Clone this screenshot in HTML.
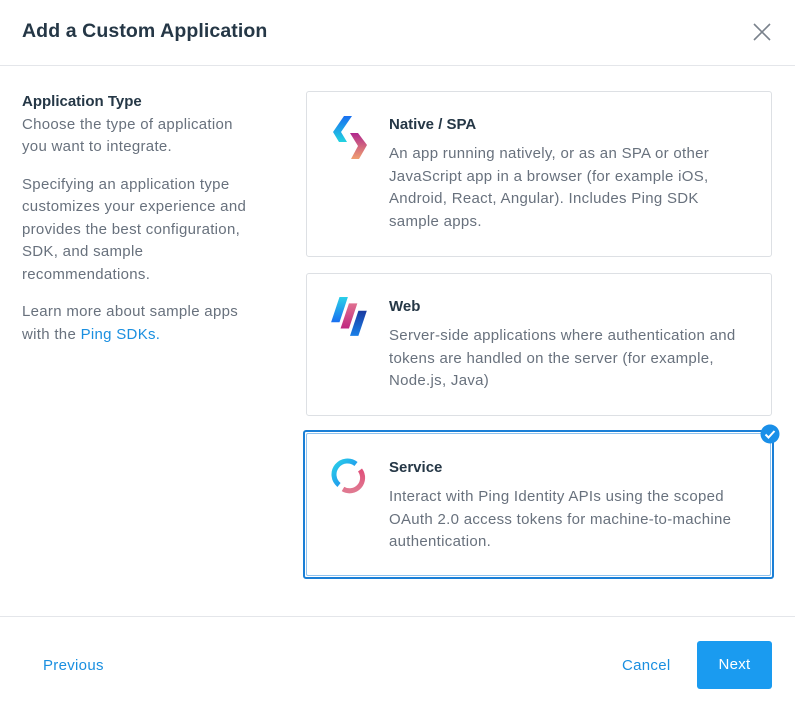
<!DOCTYPE html>
<html><head><style>
*{box-sizing:border-box;margin:0;padding:0}
body{width:795px;height:712px;background:#fff;font-family:"Liberation Sans",sans-serif;position:relative;overflow:hidden;color:#253746}
.hdr{position:absolute;left:0;top:0;width:795px;height:66px;border-bottom:1px solid #e4e6ea}
.hdr h1{position:absolute;left:22px;top:20px;font-size:19.5px;font-weight:bold;color:#253746;letter-spacing:0.1px}
.x{position:absolute;left:752px;top:22px}
.left{position:absolute;left:22px;top:91px;width:232px;font-size:15px;line-height:22.5px;color:#68717d;letter-spacing:0.3px}
.left h3{font-size:15px;font-weight:bold;color:#253746;letter-spacing:0}
.left p{margin-bottom:15px}
a{color:#1a8fe0;text-decoration:none}
.card{position:absolute;left:306px;width:466px;border:1px solid #dde0e4;border-radius:3px}
.card .ic{position:absolute;left:24px;top:22px}
.card h4{position:absolute;left:82px;top:24px;font-size:15px;font-weight:bold;color:#253746}
.card p{position:absolute;left:82px;top:51px;width:362px;font-size:15px;line-height:22.5px;color:#68717d;letter-spacing:0.3px}
.sel{left:303px;width:471px;border:2px solid #1a7fd6;border-radius:3px}
.sel .inner{position:absolute;inset:1px;border:1px solid #8ec2ee;border-radius:2px}
.ftr{position:absolute;left:0;top:616px;width:795px;border-top:1px solid #e4e6ea}
.btn{position:absolute;font-size:15px;color:#1a8fe0;letter-spacing:0.3px}
</style></head><body>
<div class="hdr"><h1>Add a Custom Application</h1>
<svg class="x" width="20" height="20" viewBox="0 0 20 20"><path d="M2 2L18 18M18 2L2 18" stroke="#7a828c" stroke-width="1.6"/></svg></div>
<div class="left">
<h3>Application Type</h3>
<p>Choose the type of application you want to integrate.</p>
<p>Specifying an application type customizes your experience and provides the best configuration, SDK, and sample recommendations.</p>
<p>Learn more about sample apps with the <a>Ping SDKs.</a></p>
</div>
<div class="card" style="top:91px;height:166px">
<svg class="ic" width="38" height="46" viewBox="0 0 36 46" style="top:22px"><defs>
<linearGradient id="g1" x1="0" y1="0" x2="0" y2="1"><stop offset="0" stop-color="#1a6ff0"/><stop offset="1" stop-color="#22d3e0"/></linearGradient>
<linearGradient id="g2" x1="0" y1="0" x2="0" y2="1"><stop offset="0" stop-color="#b0288e"/><stop offset="1" stop-color="#f0a070"/></linearGradient></defs>
<path d="M12 2H20L9 18L15 28H7L1 18Z" fill="url(#g1)"/>
<path d="M18 19H26L35 31L27 45H19L26 32Z" fill="url(#g2)"/></svg>
<h4>Native / SPA</h4>
<p>An app running natively, or as an SPA or other JavaScript app in a browser (for example iOS, Android, React, Angular). Includes Ping SDK sample apps.</p>
</div>
<div class="card" style="top:273px;height:143px">
<svg class="ic" width="38" height="42" viewBox="0 0 36 40" style="top:22px"><defs>
<linearGradient id="h1" x1="0" y1="0" x2="0" y2="1"><stop offset="0" stop-color="#2ad0e8"/><stop offset="1" stop-color="#1a6ff0"/></linearGradient>
<linearGradient id="h2" x1="0" y1="0" x2="0" y2="1"><stop offset="0" stop-color="#e07090"/><stop offset="1" stop-color="#c02880"/></linearGradient>
<linearGradient id="h3" x1="0" y1="0" x2="0" y2="1"><stop offset="0" stop-color="#1a3aa0"/><stop offset="1" stop-color="#1a80e8"/></linearGradient></defs>
<path d="M8 1H16L8 25H0Z" fill="url(#h1)"/><path d="M17 7H25L17 31H9Z" fill="url(#h2)"/><path d="M26 14H34L26 38H18Z" fill="url(#h3)"/></svg>
<h4>Web</h4>
<p>Server-side applications where authentication and tokens are handled on the server (for example, Node.js, Java)</p>
</div>
<div class="card sel" style="top:430px;height:149px"><div class="inner"></div>
<svg class="ic" style="left:26px;top:26px" width="36" height="36" viewBox="0 0 36 36"><defs>
<linearGradient id="s1" x1="0" y1="0" x2="1" y2="1"><stop offset="0" stop-color="#2ad0e8"/><stop offset="1" stop-color="#1a7ff0"/></linearGradient>
<linearGradient id="s2" x1="0" y1="0" x2="0" y2="1"><stop offset="0" stop-color="#e0507a"/><stop offset="1" stop-color="#e07890"/></linearGradient></defs>
<path d="M25 6A13 13 0 0 0 8 27" fill="none" stroke="url(#s1)" stroke-width="5"/>
<path d="M29 12A13 13 0 0 1 12 31" fill="none" stroke="url(#s2)" stroke-width="5"/></svg>
<h4 style="left:84px;top:27px">Service</h4>
<p style="left:84px;top:54px">Interact with Ping Identity APIs using the scoped OAuth 2.0 access tokens for machine-to-machine authentication.</p>
</div>
<svg style="position:absolute;left:760px;top:424px" width="20" height="20" viewBox="0 0 20 20"><circle cx="10" cy="10" r="9.5" fill="#1a8fe8"/><path d="M5.5 10.5L8.5 13.5L14.5 7" fill="none" stroke="#fff" stroke-width="2"/></svg>
<div class="ftr"></div>
<div class="btn" style="left:43px;top:657px">Previous</div>
<div class="btn" style="left:622px;top:657px">Cancel</div>
<div style="position:absolute;left:697px;top:641px;width:75px;height:48px;background:#1a9bf0;border-radius:3px;color:#fff;font-size:15px;text-align:center;line-height:48px;letter-spacing:0.3px">Next</div>
</body></html>
